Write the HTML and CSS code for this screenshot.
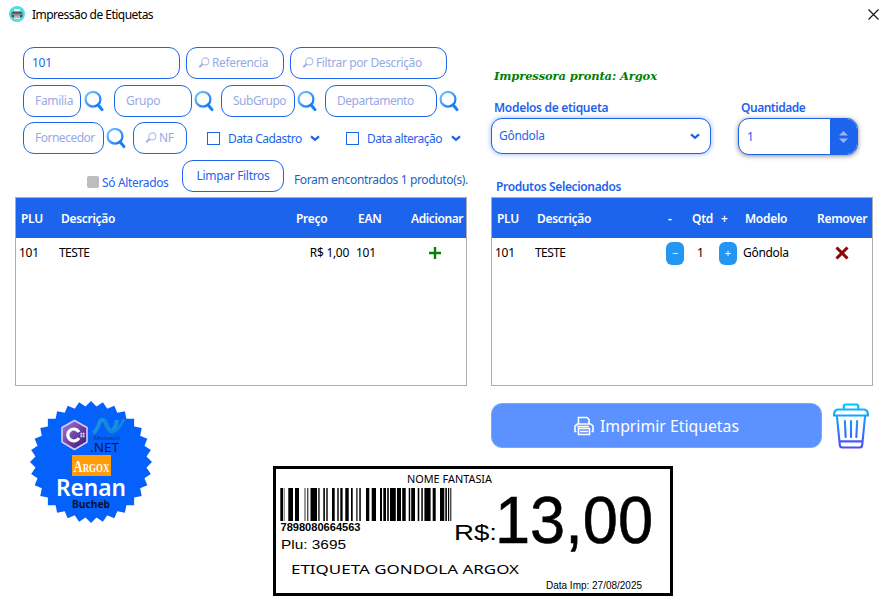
FILE: index.html
```html
<!DOCTYPE html>
<html lang="pt-BR"><head><meta charset="utf-8"><title>Impressão de Etiquetas</title><link rel="stylesheet" href="styles.css"></head>
<body>
<svg class="defs" width="0" height="0"><defs>
<linearGradient id="lens" x1="0" y1="0" x2="1" y2="1"><stop offset="0" stop-color="#7cc8ff"/><stop offset="1" stop-color="#0a72fa"/></linearGradient>
<linearGradient id="bin" gradientUnits="userSpaceOnUse" x1="0" y1="0" x2="0" y2="46"><stop offset="0" stop-color="#00c8ff"/><stop offset="1" stop-color="#5046f5"/></linearGradient>
<symbol id="mag" viewBox="0 0 22 23"><circle cx="9" cy="9.2" r="7.4" fill="none" stroke="url(#lens)" stroke-width="2.3"/><path d="M14.2 15L18 19.6" stroke="#1680fa" stroke-width="3" stroke-linecap="round"/></symbol>
<symbol id="hint" viewBox="0 0 12 12"><circle cx="7.3" cy="4.4" r="3.5" fill="none" stroke="#b5bfe5" stroke-width="1.1"/><path d="M4.6 7L1.3 10.3" stroke="#a3b1e4" stroke-width="2"/></symbol>
<symbol id="chev" viewBox="0 0 10 7"><path d="M1 1.3L5 4.8L9 1.3" fill="none" stroke="#1d64ec" stroke-width="2.3"/></symbol>
</defs></svg>
<header class="titlebar">
<svg width="17" height="17" viewBox="0 0 17 17"><circle cx="8" cy="8" r="8" fill="#50dce4"/><path d="M5 3h6v3H5z" fill="#f5efdf"/><path d="M4 5.5h8l1.5 1.5v3.5l-1.5 1H4l-1.500-1V7z" fill="#485154"/><path d="M3 8.2h10" stroke="#9aa" /><path d="M5 9.500h6v3.500H5z" fill="#eee8da"/><path d="M5 11h6" stroke="#798488"/></svg>
<span class="t title">Impressão de Etiquetas</span>
<svg class="close" width="11" height="11" viewBox="0 0 11 11"><path d="M.5 .5l10 10M10.5 .5l-10 10" stroke="#111" stroke-width="1.1"/></svg>
</header>
<main class="top">
<section class="left">
<div class="filters">
<div class="row r1"><div class="field w157 value"><span class="t">101</span></div><div class="field w98 hint"><svg width="12" height="12"><use href="#hint"/></svg><span class="t s1">Referencia</span></div><div class="field w157 hint"><svg width="12" height="12"><use href="#hint"/></svg><span class="t s2">Filtrar por Descrição</span></div></div>
<div class="row r2"><div class="field w58"><span class="t s3">Familia</span></div><svg class="m" width="22" height="23"><use href="#mag"/></svg><div class="field w78"><span class="t s4">Grupo</span></div><svg class="m" width="22" height="23"><use href="#mag"/></svg><div class="field w74"><span class="t s5">SubGrupo</span></div><svg class="m" width="22" height="23"><use href="#mag"/></svg><div class="field w112"><span class="t s6">Departamento</span></div><svg class="m" width="22" height="23"><use href="#mag"/></svg></div>
<div class="row r3"><div class="field w81"><span class="t s7">Fornecedor</span></div><svg class="m" width="22" height="23"><use href="#mag"/></svg><div class="field w54 hint"><svg width="12" height="12"><use href="#hint"/></svg><span class="t">NF</span></div><label class="date d1"><i class="box"></i><span class="t s8">Data Cadastro</span><svg width="10" height="7"><use href="#chev"/></svg></label><label class="date d2"><i class="box"></i><span class="t s9">Data alteração</span><svg width="10" height="7"><use href="#chev"/></svg></label></div>
<div class="row r4"><i class="graybox"></i><span class="t only">Só Alterados</span><button class="clear t">Limpar Filtros</button><span class="t found">Foram encontrados 1 produto(s).</span></div>
</div>
<div class="table products"><div class="tr th"><span class="t">PLU</span><span class="t">Descrição</span><span class="t">Preço</span><span class="t">EAN</span><span class="t">Adicionar</span></div>
<div class="tr td"><span class="t">101</span><span class="t caps">TESTE</span><span class="t price">R$ 1,00</span><span class="t">101</span><span class="add"><svg width="12" height="12"><path d="M6 0v12M0 6h12" stroke="#087f08" stroke-width="2.4"/></svg></span></div></div>
</section>
<section class="right">
<div class="status">Impressora pronta: Argox</div>
<div class="controls"><div class="model"><div class="t lab l1">Modelos de etiqueta</div><div class="select"><span class="t">Gôndola</span><svg width="10" height="7"><use href="#chev"/></svg></div></div>
<div class="qty"><div class="t lab l2">Quantidade</div><div class="number"><span class="t">1</span><div class="spin"><svg width="9" height="12"><path d="M0 4.5L4.5 0L9 4.5zM0 7.5L4.5 12L9 7.5z" fill="#98b4f0"/></svg></div></div></div></div>
<div class="t lab sel">Produtos Selecionados</div>
<div class="table selected"><div class="tr th"><span class="t">PLU</span><span class="t">Descrição</span><span class="t">-</span><span class="t">Qtd</span><span class="t">+</span><span class="t">Modelo</span><span class="t">Remover</span></div>
<div class="tr td"><span class="t">101</span><span class="t caps">TESTE</span><b class="step">−</b><span class="t one">1</span><b class="step">+</b><span class="t">Gôndola</span><span class="del"><svg width="14" height="14"><path d="M1.5 1.500l11 11M12.5 1.500l-11 11" stroke="#900505" stroke-width="3"/></svg></span></div></div>
</section>
</main>
<footer class="bottom">
<svg class="badge" width="124" height="124" viewBox="0 0 124 124">
<defs><linearGradient id="cs" x1="0" y1="0" x2="1" y2="1"><stop offset="0" stop-color="#a77bdc"/><stop offset="1" stop-color="#33106f"/></linearGradient>
<path id="sq" d="M62 1L123 62L62 123L1 62z"/></defs>
<g fill="#0561fb"><use href="#sq"/><use href="#sq" transform="rotate(11.25 62 62)"/><use href="#sq" transform="rotate(22.5 62 62)"/><use href="#sq" transform="rotate(33.75 62 62)"/><use href="#sq" transform="rotate(45 62 62)"/><use href="#sq" transform="rotate(56.25 62 62)"/><use href="#sq" transform="rotate(67.5 62 62)"/><use href="#sq" transform="rotate(78.75 62 62)"/></g>
<path d="M45.500 20.500L58 27.500V42L45.500 49.500L33 42V27.500z" fill="url(#cs)" stroke="#d9c8f3" stroke-width="1.6" stroke-linejoin="round"/>
<path d="M50 32A6 6 0 1 0 50 38" fill="none" stroke="#fff" stroke-width="3.2"/><path d="M52.300 32.500v5M54.700 32.500v5M51 33.800h5M51 36.200h5" stroke="#e4d6f4" stroke-width=".8"/>
<path d="M64 33Q68 31 71 21Q75 17 78 26Q81 33 84 30Q87 27 88 20" fill="none" stroke="#1b8ee0" stroke-width="4"/><path d="M76 20Q79 32 84 32Q91 29 95 19" fill="none" stroke="#1387d5" stroke-width="3"/>
<text x="65" y="39.500" class="ms" textLength="26" lengthAdjust="spacingAndGlyphs">Microsoft</text><text x="61" y="51.500" class="net" textLength="29" lengthAdjust="spacingAndGlyphs">.NET</text>
<path d="M43 55h39v21H43z" fill="#ff9c08"/><text x="44.500" y="71.500" class="argox" textLength="36" lengthAdjust="spacingAndGlyphs">Argox</text>
<text x="27" y="96" class="renan" textLength="70" lengthAdjust="spacingAndGlyphs">Renan</text><text x="43" y="108" class="bucheb" textLength="38" lengthAdjust="spacingAndGlyphs">Bucheb</text>
</svg>
<svg class="tag" width="400" height="130" viewBox="0 0 400 130"><rect x="1.5" y="1.5" width="397" height="127" fill="#fff" stroke="#000" stroke-width="3"/>
<text x="134" y="17" class="noto" font-size="11.5" textLength="85" lengthAdjust="spacingAndGlyphs">NOME FANTASIA</text>
<path d="M7.300 22h2.700v33h-2.700zM15.300 22h4.700v33h-4.700zM22 22h4v33h-4zM34.300 22h1v33h-1zM37.500 22h6.500v33h-6.500zM45.300 22h1.300v33h-1.300zM50.300 22h1.600v33h-1.600zM53.300 22h1.400v33h-1.400zM59 22h2.700v33h-2.700zM64.300 22h1.400v33h-1.400zM67.300 22h2.300v33h-2.300zM72.300 22h3.400v33h-3.400zM78 22h1.700v33h-1.700zM83.300 22h1.200v33h-1.200zM86.300 22h1.500v33h-1.500zM93 22h3.300v33h-3.300zM98.700 22h4.300v33h-4.300zM107 22h2v33h-2zM110.300 22h2.700v33h-2.700zM114.200 22h1.600v33h-1.600zM117 22h5.800v33h-5.800zM124 22h4v33h-4zM129.200 22h3.500v33h-3.500zM135.700 22h1.500v33h-1.500zM138.200 22h3.800v33h-3.800zM144.700 22h1.600v33h-1.600zM148.300 22h1.500v33h-1.500zM151.400 22h6.200v33h-6.200zM159.700 22h3v33h-3zM167 22h4.300v33h-4.300zM172.300 22h1.600v33h-1.600zM175 22h1.200v33h-1.200zM177.300 22h1v33h-1z"/><path d="M10.500 22h1.500v33h-1.500zM31 22h2v33h-2z" fill="#999"/>
<text x="7.5" y="65" class="arial b" font-size="10.5" textLength="80" lengthAdjust="spacingAndGlyphs">7898080664563</text>
<text x="8" y="83" class="arial" font-size="12.5" textLength="65" lengthAdjust="spacingAndGlyphs">Plu: 3695</text>
<text x="181" y="74" class="arial" font-size="22" textLength="43" lengthAdjust="spacingAndGlyphs">R$:</text>
<text x="222" y="77" class="arial" font-size="67" textLength="158" lengthAdjust="spacingAndGlyphs" stroke="#000" stroke-width=".6">13,00</text>
<text x="18" y="108" class="noto" font-size="13" textLength="228" lengthAdjust="spacingAndGlyphs">ETIQUETA GONDOLA ARGOX</text>
<text x="273" y="123" class="arial" font-size="10.5" textLength="96" lengthAdjust="spacingAndGlyphs">Data Imp: 27/08/2025</text></svg>
<div class="actions"><button class="print"><svg width="20" height="20" viewBox="0 0 20 20" fill="none" stroke="#fff" stroke-width="1.6"><path d="M4.500 8V1.500h8.500l2 2V8M2.500 15.500H1V10L3.500 8h13L19 10v5.500h-1.500M4.500 12.500h11v6h-11zM3 10.500h12M6 15.500h8"/></svg><span>Imprimir Etiquetas</span></button>
<svg class="trash" width="36" height="46" viewBox="0 0 37 46" preserveAspectRatio="none" fill="none" stroke="url(#bin)" stroke-width="2.2"><path d="M11 6.500V3Q11 1.500 13 1.500H24Q26 1.500 26 3V6.500M5 6.500H32Q36 7 36 12.500H1Q1 7 5 6.500zM4 13L7 42Q7.200 44.500 9.500 44.500H27.500Q29.800 44.500 30 42L33 13M6 38.300H31"/><path d="M12.200 18L13 34M18.500 18V34M24.800 18L24 34" stroke-linecap="round"/></svg></div>
</footer>
</body></html>
```
FILE: styles.css
```css
*{box-sizing:border-box}
body{margin:0;width:886px;height:612px;overflow:hidden;background:#fff;color:#1d64ec;font:12px "Noto Sans",sans-serif}
.defs{position:absolute}
svg{display:block;flex:none}
.t{font-size:12px;line-height:16px;letter-spacing:-.3px;white-space:nowrap}
.titlebar{height:30px;display:flex;align-items:center;padding:0 7px 1px 9px;color:#000}
.titlebar .title{margin-left:6px;padding-top:1px;letter-spacing:-.52px}
.close{margin-left:auto}
.top{display:flex;gap:24px;padding-left:15px}
.left{width:452px}
.right{width:382px}
.filters{height:167px;padding:17px 0 0 8px}
.row{display:flex;align-items:center;height:32px}
.r1{gap:6px}
.r2{margin-top:6px}
.r3{margin-top:5px}
.r4{margin-top:6px}
.field{height:32px;flex:none;border:1px solid #1d64ec;border-radius:11px;display:flex;align-items:center;padding-left:11px;color:#97aae5}
.value{color:#1d64ec;padding-left:8px}
.hint svg{margin-right:2px}
.hint .s1{letter-spacing:-.35px}
.hint .s2{letter-spacing:-.38px}
.field .s6,.field .s5,.field .s7{letter-spacing:-.5px}
.w157{width:157px}.w98{width:98px}.w58{width:58px}.w78{width:78px}.w74{width:74px}.w112{width:112px}.w81{width:81px}.w54{width:54px}
.r2 .m{margin:0 7px 0 3px}
.r2 .w78+.m,.r2 .w74+.m{margin:0 5px 0 2px}
.r2 .w74+.m{margin-right:6px}
.r2 .w112+.m{margin:0 0 0 2px}
.r2 .m+.w78{margin-left:1px}
.r3 .m{margin:0 5px 0 2px}
.date{display:flex;align-items:center;flex:none}
.d1{margin-left:20px;width:139px}
.box{width:13px;height:13px;flex:none;border:1px solid #1d64ec;margin-right:8px}
.date .t{letter-spacing:-.5px;padding-top:2px}
.d1 .t{width:73px;margin-right:9px}
.d2 .t{width:75px;margin-right:9px}
.r3 .d2 .t{letter-spacing:-.48px}
.d2 .box{margin-right:8px}
.graybox{width:12px;height:12px;flex:none;margin:12px 3px 0 64px;border-radius:2px;background:#bdbdbd}
.only{margin-top:14px;width:80px;flex:none}
.row .only{letter-spacing:-.35px}
.clear{width:102px;height:32px;flex:none;padding:0;border:1px solid #1d64ec;border-radius:11px;background:#fff;color:#1d64ec;font-family:inherit}
.row .found{margin:8px 0 0 10px;color:#1663c7;letter-spacing:-.36px}
.table{height:189px;border:1px solid #abadb3;color:#000}
.tr{display:grid;align-items:center}
.th{height:40px;background:#1d64ec;color:#fff;font-weight:600;padding:2px 0 0 5px}
.td{height:30px;padding-left:3px}
.products .th{grid-template-columns:40px 235px 62px 53px 55px}
.products .th .t:last-child{letter-spacing:-.4px}
.products .td{grid-template-columns:40px 235px 55px 80px 20px}
.price{text-align:right}
.products .td .price+.t{padding-left:7px}
.selected .th{grid-template-columns:40px 131px 24px 29px 24px 72px 56px}
.selected .td{grid-template-columns:40px 131px 31px 22px 24px 92px 20px}
.caps{letter-spacing:-.6px}
.step{width:18px;height:23px;border-radius:6px;background:#2196f3;color:#fff;font:11px/22px "Noto Sans",sans-serif;text-align:center}
.status{height:16px;margin:38px 0 0 3px;color:green;font:italic bold 11.5px/16px "DejaVu Serif",serif;letter-spacing:-.12px;white-space:nowrap}
.controls{display:flex;gap:27px;margin-top:16px}
.lab{font-weight:600}
.l2{letter-spacing:-.48px}
.l1,.l2{margin-left:3px;height:18px}
.sel.lab{letter-spacing:-.36px}
.select,.number{display:flex;align-items:center;border:1px solid #1d64ec;border-radius:11px;overflow:hidden;background:#fff}
.select{width:220px;height:36px;padding:0 10px 0 7px;justify-content:space-between;box-shadow:0 0 5px #1d64ec80}
.number{width:120px;height:37px;padding-left:8px;justify-content:space-between;box-shadow:0 1px 5px #0007}
.spin{width:27px;height:37px;background:#1d64ec;display:flex;align-items:center;justify-content:center}
.sel{margin:24px 0 2px 5px}
.bottom{display:grid;grid-template-columns:243px 218px 412px;padding-left:30px;align-items:start}
.badge{margin:14px 0 0 -1px}
.tag{margin-top:80px}
.actions{display:flex;padding-top:17px;gap:11px}
.print{width:331px;height:45px;border:1px solid #78a7ff;border-radius:11px;background:#5c92ff;color:#fff;display:flex;align-items:center;justify-content:center;gap:6px;font:15.8px "Noto Sans",sans-serif;padding:0}
.print span{padding-top:1px}
.ms{font:5px "Liberation Sans",sans-serif;fill:#073b75}
.net{font:12px/1 "Noto Sans",sans-serif;fill:#061c42}
.argox{font:bold 17px "Liberation Serif",serif;font-variant:small-caps;fill:#fff}
.renan{font:600 23px "Noto Sans",sans-serif;fill:#fff}
.bucheb{font:bold 10px "Noto Sans",sans-serif;fill:#061333}
.noto{font-family:"Noto Sans",sans-serif}
.arial{font-family:"Liberation Sans",sans-serif}
.b{font-weight:bold}
```
